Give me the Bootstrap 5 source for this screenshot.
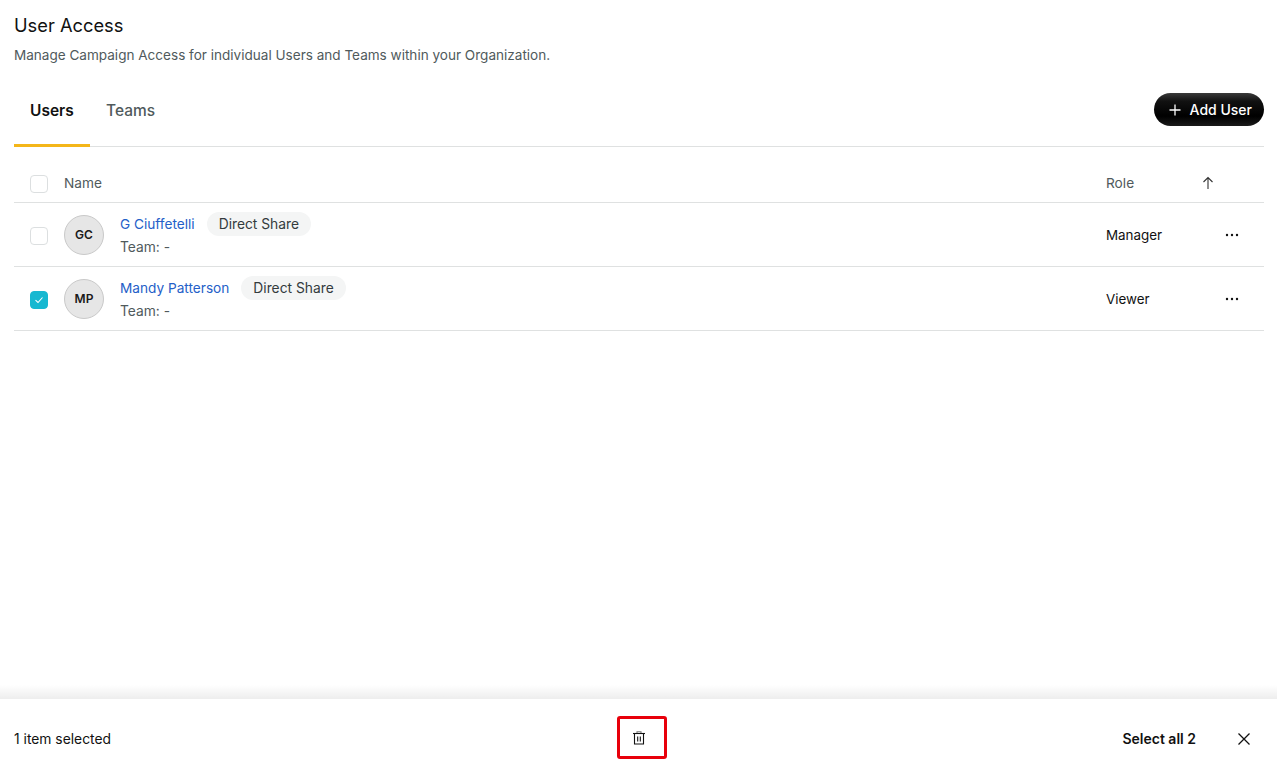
<!DOCTYPE html>
<html lang="en">
<head>
<meta charset="utf-8">
<title>User Access</title>
<link href="https://cdn.jsdelivr.net/npm/bootstrap@5.3.0/dist/css/bootstrap.min.css" rel="stylesheet">
<style>
html,body{height:100%}
body{font-family:Inter,"Liberation Sans",sans-serif;font-size:14px;color:#111;background:#fff;overflow:hidden}
.ua-page{height:766px}
.ua-main{padding:14px 13px 0 14px}
.ua-title{font-size:18.3px;line-height:22px;font-weight:400;color:#111;margin:0}
.ua-sub{font-size:13.55px;line-height:20px;color:#505a5c;margin:9px 0 0}
.ua-tabs{height:62px;margin-top:20px;border-bottom:1px solid #dfe1e1}
.ua-tab{display:block;height:62px;line-height:52px;padding:0 16px;font-size:15.5px;font-weight:500;color:#505a5c;text-decoration:none;border-bottom:3px solid transparent}
.ua-tab.on{color:#111;font-weight:600;border-bottom-color:#f4b619;width:76px}
.ua-add{height:33px;border-radius:17px;background:linear-gradient(#3a3a3a,#111 25%,#000 70%,#1a1a1a);color:#fff;border:0;padding:0 12px 0 14px;font-size:14px;font-weight:500;margin-top:-12px}
.ua-add:hover{background:#000;color:#fff}
.ua-row{display:flex;align-items:center;border-bottom:1px solid #dfe1e1}
.ua-head{height:56px;padding-top:17px;color:#505a5c;font-size:13.7px}
.ua-item{height:64px;padding-top:1px}
.ua-c1{width:50px;padding:2px 0 0 16px;display:flex;flex:none}
.ua-c2{flex:1;min-width:0;display:flex;align-items:center}
.ua-c3{width:95px;flex:none}
.ua-c4{width:63px;flex:none;display:flex;justify-content:flex-start}
.ua-check{width:18px;height:18px;border:1px solid #dcdfe0;border-radius:4px;background:#fff;display:flex;align-items:center;justify-content:center}
.ua-check.on{background:#17b8d1;border-color:#17b8d1}
.ua-ava{width:40px;height:40px;border-radius:50%;background:#e6e6e6;border:1px solid #c9c9c9;display:flex;align-items:center;justify-content:center;font-size:12px;font-weight:600;color:#1a1a1a;margin-right:16px;flex:none}
.ua-name{color:#2460c8;text-decoration:none;font-size:13.65px;line-height:20px}
.ua-chip{background:#f4f5f5;color:#333b3d;border-radius:12px;height:24px;line-height:24px;padding:0 12px;margin-left:12px;font-size:13.8px}
.ua-team{color:#505a5c;font-size:13.8px;line-height:20px;margin:1px 0 2px}
.ua-role{font-size:13.4px;color:#111}
.ua-fill{flex:1}
.ua-shade{height:14px;background:linear-gradient(rgba(0,0,0,0),rgba(0,0,0,.07))}
.ua-bar{height:67px;padding:14px 12px 0 14px;background:#fff;position:relative;font-size:13.85px}
.ua-trash{position:absolute;left:617px;top:17px;width:50px;height:43px;border:3px solid #e8000b;border-radius:3px;background:#fff;padding:0 0 0 12px;display:flex;align-items:center}
.ua-selall{font-weight:600;font-size:14px;color:#111;margin:0 41px 2px 0}
.ua-x{line-height:0;margin:0 14px 2px 0}
</style>
</head>
<body>
<div class="ua-page d-flex flex-column">
  <div class="ua-main">
    <h1 class="ua-title">User Access</h1>
    <p class="ua-sub">Manage Campaign Access for individual Users and Teams within your Organization.</p>
    <div class="ua-tabs d-flex align-items-center justify-content-between">
      <div class="d-flex">
        <a class="ua-tab on" href="#">Users</a>
        <a class="ua-tab" href="#">Teams</a>
      </div>
      <button class="btn ua-add d-flex align-items-center gap-2" type="button">
        <svg width="14" height="14" viewBox="0 0 14 14" fill="none" stroke="#fff" stroke-width="1.3"><path d="M7 1.500v11M1.500 7h11"/></svg>
        Add User
      </button>
    </div>
    <div class="ua-row ua-head">
      <div class="ua-c1"><span class="ua-check"></span></div>
      <div class="ua-c2">Name</div>
      <div class="ua-c3">Role</div>
      <div class="ua-c4"><svg width="14" height="14" viewBox="0 0 14 14" fill="none" stroke="#333" stroke-width="1.1"><path d="M7 13V1.500M2.500 6 7 1.500 11.500 6"/></svg></div>
    </div>
    <div class="ua-row ua-item">
      <div class="ua-c1"><span class="ua-check"></span></div>
      <div class="ua-c2">
        <div class="ua-ava">GC</div>
        <div>
          <div class="d-flex align-items-center"><a class="ua-name" href="#">G Ciuffetelli</a><span class="ua-chip">Direct Share</span></div>
          <div class="ua-team">Team: -</div>
        </div>
      </div>
      <div class="ua-c3 ua-role">Manager</div>
      <div class="ua-c4"><svg class="ms-4" width="14" height="4" viewBox="0 0 14 4" fill="#111"><circle cx="2" cy="2" r="1.200"/><circle cx="7" cy="2" r="1.200"/><circle cx="12" cy="2" r="1.200"/></svg></div>
    </div>
    <div class="ua-row ua-item">
      <div class="ua-c1"><span class="ua-check on"><svg width="10" height="10" viewBox="0 0 10 10" fill="none" stroke="#fff" stroke-width="1.1"><path d="M1.500 5.200 4 7.500 8.500 2.500"/></svg></span></div>
      <div class="ua-c2">
        <div class="ua-ava">MP</div>
        <div>
          <div class="d-flex align-items-center"><a class="ua-name" href="#">Mandy Patterson</a><span class="ua-chip">Direct Share</span></div>
          <div class="ua-team">Team: -</div>
        </div>
      </div>
      <div class="ua-c3 ua-role">Viewer</div>
      <div class="ua-c4"><svg class="ms-4" width="14" height="4" viewBox="0 0 14 4" fill="#111"><circle cx="2" cy="2" r="1.200"/><circle cx="7" cy="2" r="1.200"/><circle cx="12" cy="2" r="1.200"/></svg></div>
    </div>
  </div>
  <div class="ua-fill"></div>
  <div class="ua-shade"></div>
  <div class="ua-bar d-flex align-items-center">
    <span>1 item selected</span>
    <button class="ua-trash" type="button" aria-label="Delete">
      <svg width="14" height="15" viewBox="0 0 14 15" fill="none" stroke="#111" stroke-width="1.100"><path d="M5 3.500V1.800h4v1.700" stroke="#777"/><path d="M1 3.500h12"/><path d="M2.500 3.500v10.500h9V3.500M5.700 6.500v5M8.300 6.500v5"/></svg>
    </button>
    <span class="ms-auto ua-selall">Select all 2</span>
    <span class="ua-x"><svg width="14" height="14" viewBox="0 0 14 14" fill="none" stroke="#111" stroke-width="1.300"><path d="M1.500 1.500l11 11M12.500 1.500l-11 11"/></svg></span>
  </div>
</div>
<script src="https://cdn.jsdelivr.net/npm/bootstrap@5.3.0/dist/js/bootstrap.bundle.min.js"></script>
</body>
</html>
